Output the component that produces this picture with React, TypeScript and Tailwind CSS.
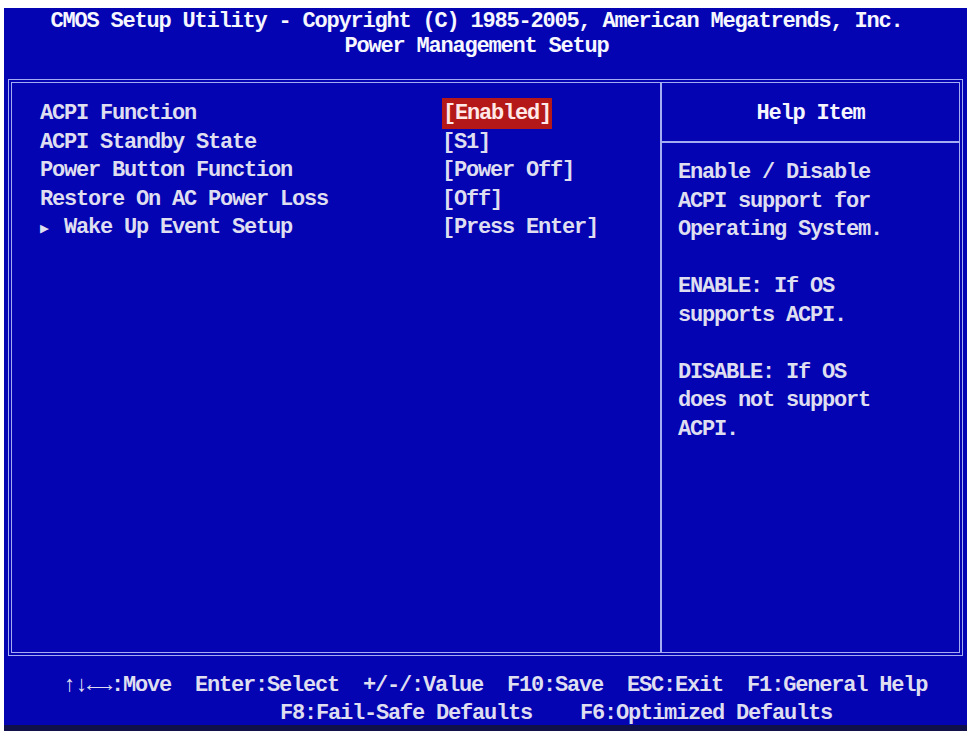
import React from 'react';

const settings = [
    { label: 'ACPI Function', value: '[Enabled]', selected: true },
    { label: 'ACPI Standby State', value: '[S1]' },
    { label: 'Power Button Function', value: '[Power Off]' },
    { label: 'Restore On AC Power Loss', value: '[Off]' },
    { label: 'Wake Up Event Setup', value: '[Press Enter]', submenu: true },
];

const helpLines = [
    'Enable / Disable',
    'ACPI support for',
    'Operating System.',
    '',
    'ENABLE: If OS',
    'supports ACPI.',
    '',
    'DISABLE: If OS',
    'does not support',
    'ACPI.',
];

const font = "font-['Liberation_Mono','DejaVu_Sans_Mono',monospace] font-bold text-[22px] tracking-[-1.2px]";

export default function App() {
    return (
        <div className="w-[971px] h-[731px] bg-white pt-[8px] pl-[4px] pr-[4px] overflow-hidden">
            <div className={`w-[963px] h-[723px] bg-[#0404b2] border-b-[6px] border-[#10104a] flex flex-col ${font}`}>
                {/* header */}
                <div className="h-[71px] shrink-0 pt-[1px] pr-[18px] text-center text-[#f6f6ff] leading-[25px] whitespace-pre">
                    <div>CMOS Setup Utility - Copyright (C) 1985-2005, American Megatrends, Inc.</div>
                    <div>Power Management Setup</div>
                </div>

                {/* main box */}
                <div className="mx-[4px] h-[577px] shrink-0 border-[4px] border-double border-[#a4acf2] flex">
                    <div className="w-[648px] pt-[17px] pl-[28px] text-[#dedef0] leading-[28.5px]">
                        {settings.map((s, i) => (
                            <div key={i} className="flex whitespace-pre">
                                <div className="w-[402px]">
                                    {s.submenu ? (
                                        <span>
                                            <span className="text-[15px] inline-block w-[24px]">▶</span>
                                            {s.label}
                                        </span>
                                    ) : (
                                        s.label
                                    )}
                                </div>
                                <div>
                                    <span className={s.selected ? 'bg-[#b41818] text-[#ffe8e8] px-[1px] py-[3px]' : ''}>
                                        {s.value}
                                    </span>
                                </div>
                            </div>
                        ))}
                    </div>
                    <div className="flex-1 border-l-2 border-[#a4acf2] flex flex-col">
                        <div className="h-[60px] pt-[2px] border-b-2 border-[#a4acf2] flex items-center justify-center text-[#f6f6ff]">
                            Help Item
                        </div>
                        <div className="pt-[16px] pl-[16px] text-[#dedef0] leading-[28.5px] whitespace-pre">
                            {helpLines.map((l, i) => (
                                <div key={i} className="h-[28.5px]">{l}</div>
                            ))}
                        </div>
                    </div>
                </div>

                {/* footer */}
                <div className="shrink-0 pt-[16px] text-[#dedef0] leading-[28px] whitespace-pre">
                    <div className="pl-[59px]">↑↓←→:Move  Enter:Select  +/-/:Value  F10:Save  ESC:Exit  F1:General Help</div>
                    <div className="pl-[276px]">F8:Fail-Safe Defaults    F6:Optimized Defaults</div>
                </div>
            </div>
        </div>
    );
}
